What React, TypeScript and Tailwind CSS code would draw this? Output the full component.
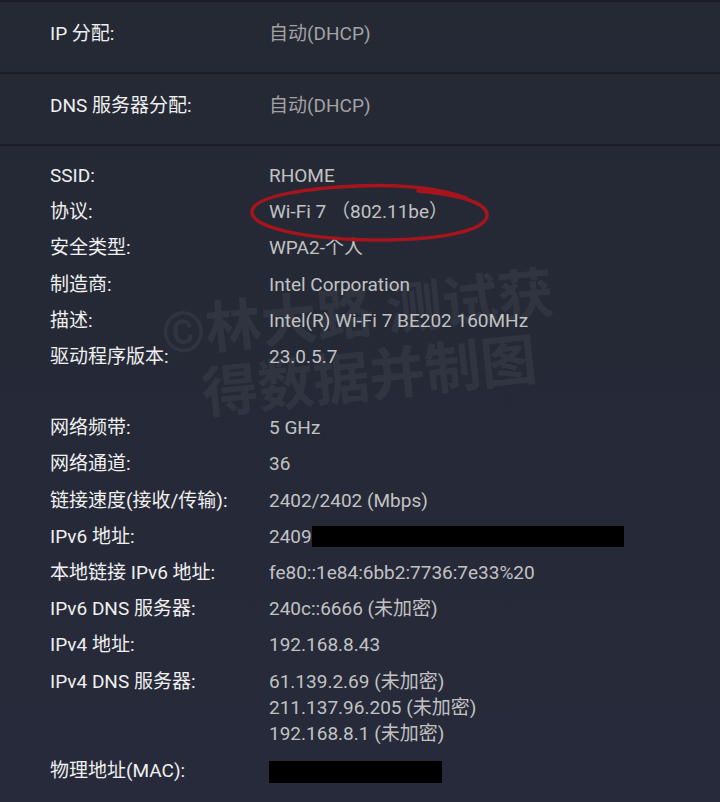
import React from 'react'

type Row = { label: string; value: React.ReactNode; lines?: string[] }

const font = { fontFamily: 'Roboto, "Noto Sans CJK SC", sans-serif' }

const wifi: Row[] = [
  { label: 'SSID:', value: 'RHOME' },
  { label: '协议:', value: 'Wi-Fi 7 （802.11be）' },
  { label: '安全类型:', value: 'WPA2-个人' },
  { label: '制造商:', value: 'Intel Corporation' },
  { label: '描述:', value: 'Intel(R) Wi-Fi 7 BE202 160MHz' },
  { label: '驱动程序版本:', value: '23.0.5.7' },
]

const net: Row[] = [
  { label: '网络频带:', value: '5 GHz' },
  { label: '网络通道:', value: '36' },
  { label: '链接速度(接收/传输):', value: '2402/2402 (Mbps)' },
  {
    label: 'IPv6 地址:',
    value: (
      <span className="flex items-center">
        2409<span className="inline-block w-[312px] h-[21px] bg-black" />
      </span>
    ),
  },
  { label: '本地链接 IPv6 地址:', value: 'fe80::1e84:6bb2:7736:7e33%20' },
  { label: 'IPv6 DNS 服务器:', value: '240c::6666 (未加密)' },
  { label: 'IPv4 地址:', value: '192.168.8.43' },
  {
    label: 'IPv4 DNS 服务器:',
    value: '',
    lines: ['61.139.2.69 (未加密)', '211.137.96.205 (未加密)', '192.168.8.1 (未加密)'],
  },
  {
    label: '物理地址(MAC):',
    value: <span className="inline-block w-[173px] h-[22px] bg-black align-middle" />,
  },
]

function InfoRow({ r }: { r: Row }) {
  return (
    <div className={`flex pt-[5.1px] leading-[26px] text-[19px] ${r.lines ? 'pb-[6.5px]' : 'pb-[5.1px]'}`}>
      <div className="w-[219px] shrink-0 text-[#f0f0f0]">{r.label}</div>
      <div className="text-[#c2c2c2]">
        {r.lines ? r.lines.map((l) => <div key={l}>{l}</div>) : r.value}
      </div>
    </div>
  )
}

export default function App() {
  return (
    <div
      className="relative w-[720px] h-[802px] overflow-hidden bg-gradient-to-b from-[#242934] to-[#272a3a] border-t-2 border-[#1b1e26]"
      style={font}
    >
      {/* watermark */}
      <div className="absolute left-[164px] top-[280px] -rotate-6 pointer-events-none font-bold text-[56px] leading-[64px] text-white/[0.055] whitespace-nowrap">
        <div>©林大路 测试获</div>
        <div className="pl-[34px]">得数据并制图</div>
      </div>

      {/* DHCP block */}
      {['IP 分配:', 'DNS 服务器分配:'].map((l) => (
        <div key={l} className="flex items-center h-[72px] pl-[50px] pb-[5px] text-[19px] border-b-2 border-[#1b1e26]">
          <div className="w-[219px] text-[#f0f0f0]">{l}</div>
          <div className="text-[#a3a3a3]">自动(DHCP)</div>
        </div>
      ))}

      <div className="relative pl-[50px] pt-[12px]">
        {wifi.map((r) => (
          <InfoRow key={r.label} r={r} />
        ))}
        <div className="h-[35px]" />
        {net.map((r) => (
          <InfoRow key={r.label} r={r} />
        ))}
      </div>

      {/* red marker circle */}
      <svg className="absolute inset-0 pointer-events-none" width="720" height="802" viewBox="0 0 720 802">
        <path
          d="M466 196 C438 185 390 181 338 185 C290 189 254 196 252 209 C250 224 296 236 368 238 C438 239 487 229 487 213 C487 201 462 193 418 189"
          fill="none"
          stroke="#a8141c"
          strokeWidth="3.5"
          strokeLinecap="round"
        />
      </svg>
    </div>
  )
}
